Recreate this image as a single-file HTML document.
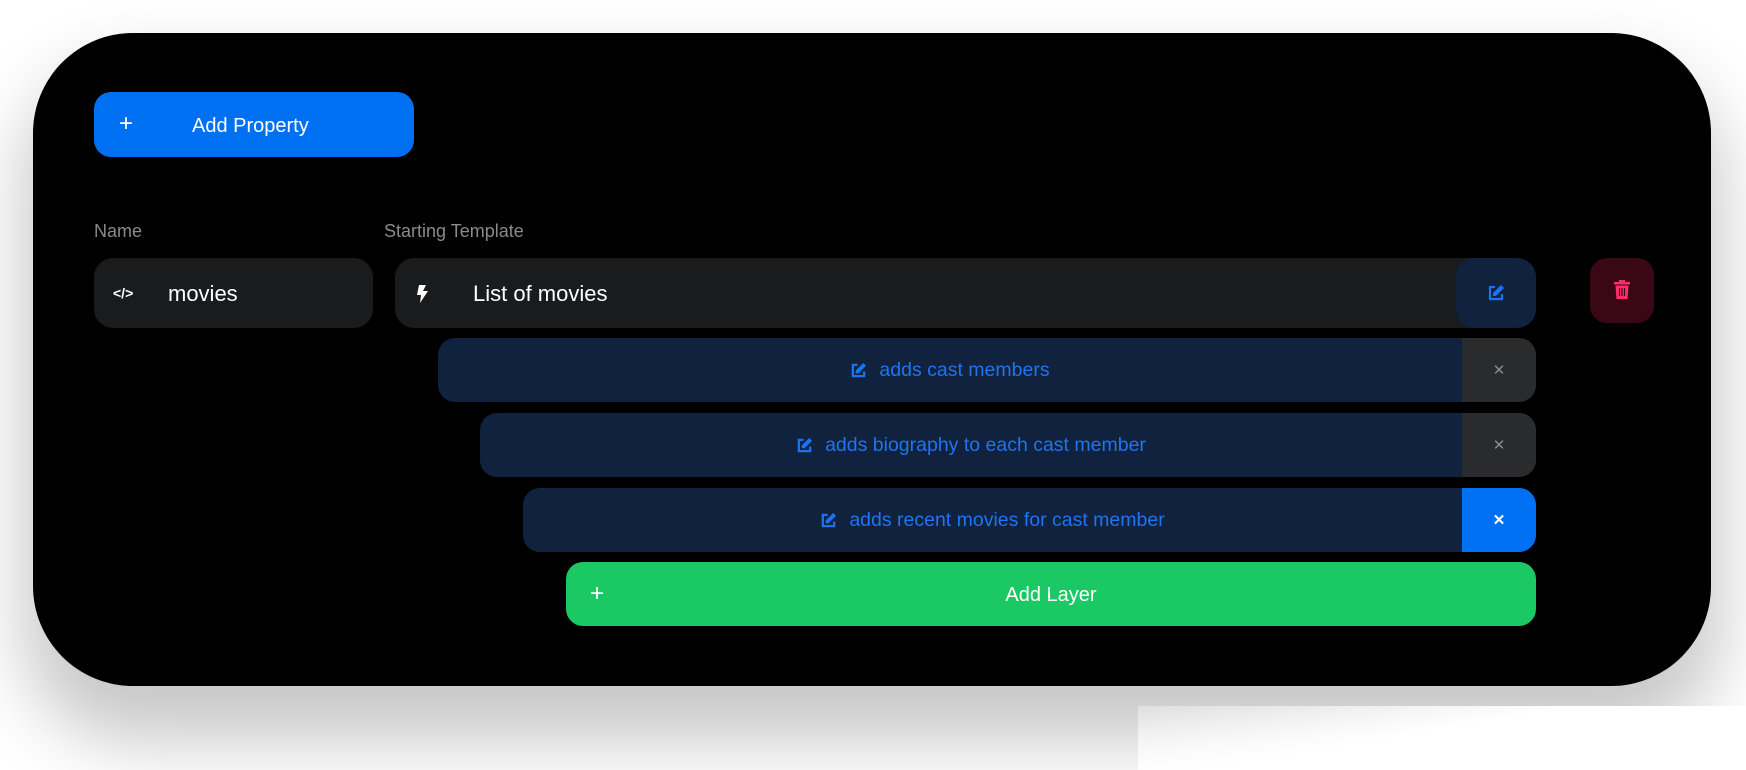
<!DOCTYPE html>
<html><head><meta charset="utf-8"><style>
*{margin:0;padding:0;box-sizing:border-box}
body{width:1746px;height:770px;background:#fff;position:relative;overflow:hidden;font-family:"Liberation Sans",sans-serif}
.card{position:absolute;left:33px;top:33px;width:1678px;height:653px;background:#000;border-radius:100px;box-shadow:0 45px 70px 10px rgba(0,0,0,.22)}
.wcover{position:absolute;left:1138px;top:706px;width:608px;height:64px;background:linear-gradient(170deg,rgba(255,255,255,.3),#fff 45%)}
.a{position:absolute}
.btn{background:#0070f3;border-radius:17px;color:#fff}
.lbl{color:#8a8a8a;font-size:18px}
.inp{background:#1a1b1d;border-radius:19px;color:#fff}
.row{background:#10223d;border-radius:17px;overflow:hidden;color:#1f74f0;font-size:19.5px}
.row .t{position:absolute;left:0;right:74px;top:0;bottom:0;display:flex;align-items:center;justify-content:center;gap:12px}
.row .x{position:absolute;right:0;top:0;width:74px;height:100%;background:#2a2b2d;display:flex;align-items:center;justify-content:center;color:#8a8a8a;font-size:15px}
</style></head><body>
<div class="card"></div>
<div class="wcover"></div>

<div class="a btn" style="left:94px;top:92px;width:320px;height:65px">
 <span class="a" style="left:25px;top:18px;font-size:24px">+</span>
 <span class="a" style="left:98px;top:23px;font-size:20px">Add Property</span>
</div>

<div class="a lbl" style="left:94px;top:221px">Name</div>
<div class="a lbl" style="left:384px;top:221px">Starting Template</div>

<div class="a inp" style="left:94px;top:258px;width:279px;height:70px">
 <span class="a" style="left:19px;top:27px;font-size:14px;font-weight:bold">&lt;/&gt;</span>
 <span class="a" style="left:74px;top:23px;font-size:22px">movies</span>
</div>

<div class="a inp" style="left:395px;top:258px;width:1141px;height:70px;overflow:hidden">
 <svg class="a" style="left:20px;top:27px" width="14" height="18" viewBox="0 0 14 18"><path d="M4 0H11L8 6H13L5 18L6 10H2Z" fill="#fff"/></svg>
 <span class="a" style="left:78px;top:23px;font-size:22px">List of movies</span>
 <div class="a" style="right:0;top:0;width:80px;height:70px;background:#10223d;border-radius:19px">
  <svg class="a" style="left:31px;top:26px" width="18" height="18" viewBox="0 0 18 18"><path d="M8 3H3V15H15V10" fill="none" stroke="#1a73f0" stroke-width="2.2"/><path d="M14 1L17 4L9 12H6V9Z" fill="#1a73f0"/></svg>
 </div>
</div>

<div class="a" style="left:1590px;top:258px;width:64px;height:65px;background:#3a0814;border-radius:17px">
 <svg class="a" style="left:24px;top:22px" width="16" height="19" viewBox="0 0 16 19"><rect x="0" y="2" width="16" height="2.5" fill="#ff2d6a"/><rect x="5" y="0" width="6" height="3" fill="#ff2d6a"/><path d="M1.5 5.5H14.5L13.5 19H2.5Z" fill="#ff2d6a"/><path d="M5.5 8V16M8 8V16M10.5 8V16" stroke="#3a0814" stroke-width="1.2"/></svg>
</div>

<div class="a row" style="left:438px;top:338px;width:1098px;height:64px">
 <div class="t"><svg width="17" height="17" viewBox="0 0 18 18"><path d="M8 3H3V15H15V10" fill="none" stroke="#1a73f0" stroke-width="2.4"/><path d="M14 1L17 4L9 12H6V9Z" fill="#1a73f0"/></svg>adds cast members</div>
 <div class="x">✕</div>
</div>
<div class="a row" style="left:480px;top:413px;width:1056px;height:64px">
 <div class="t"><svg width="17" height="17" viewBox="0 0 18 18"><path d="M8 3H3V15H15V10" fill="none" stroke="#1a73f0" stroke-width="2.4"/><path d="M14 1L17 4L9 12H6V9Z" fill="#1a73f0"/></svg>adds biography to each cast member</div>
 <div class="x">✕</div>
</div>
<div class="a row" style="left:523px;top:488px;width:1013px;height:64px">
 <div class="t"><svg width="17" height="17" viewBox="0 0 18 18"><path d="M8 3H3V15H15V10" fill="none" stroke="#1a73f0" stroke-width="2.4"/><path d="M14 1L17 4L9 12H6V9Z" fill="#1a73f0"/></svg>adds recent movies for cast member</div>
 <div class="x" style="background:#0070f3;color:#fff;font-weight:bold">✕</div>
</div>

<div class="a" style="left:566px;top:562px;width:970px;height:64px;background:#1ac964;border-radius:17px;color:#fff">
 <span class="a" style="left:24px;top:18px;font-size:24px">+</span>
 <div class="a" style="left:0;right:0;top:22px;text-align:center;font-size:20px">Add Layer</div>
</div>
</body></html>
